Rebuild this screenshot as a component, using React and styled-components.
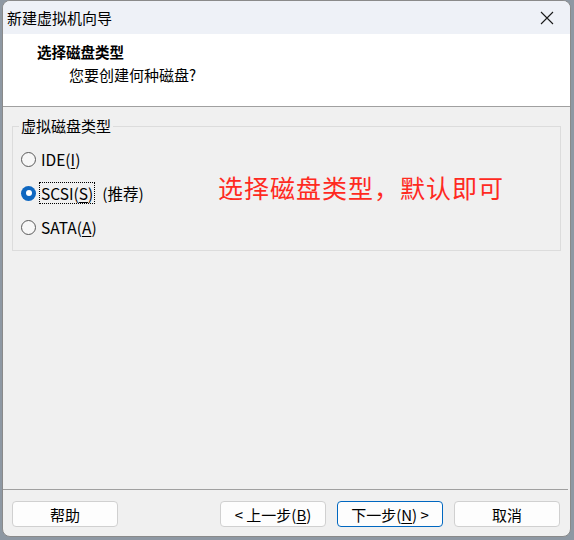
import React from "react";
import styled, { createGlobalStyle } from "styled-components";

const GlobalStyle = createGlobalStyle`
  html, body {
    margin: 0;
    padding: 0;
    background: #8e98a3;
  }
  body {
    font-family: "Noto Sans CJK SC", "Microsoft YaHei", "Noto Sans", sans-serif;
    color: #000;
  }
`;

const Desk = styled.div`
  width: 574px;
  height: 540px;
  padding-left: 2px;
  box-sizing: border-box;
`;

const Window = styled.div`
  width: 569px;
  height: 537px;
  box-sizing: border-box;
  border: 1px solid #8a8a8a;
  border-radius: 8px;
  background: #f0f0f0;
  overflow: hidden;
  display: flex;
  flex-direction: column;
`;

const TitleBar = styled.div`
  height: 33px;
  flex: none;
  background: #eef1f7;
  display: flex;
  align-items: center;
  justify-content: space-between;
  padding-left: 4px;
  font-size: 15px;
`;

const CloseButton = styled.div`
  width: 46px;
  height: 33px;
  display: flex;
  align-items: center;
  justify-content: center;
`;

const Header = styled.div`
  height: 73px;
  flex: none;
  background: #ffffff;
  border-bottom: 1px solid #a0a0a0;
  box-sizing: border-box;
  padding: 8px 0 0 34px;
`;

const HeaderTitle = styled.div`
  font-size: 14.5px;
  font-weight: bold;
  line-height: 20px;
`;

const HeaderSub = styled.div`
  font-size: 15px;
  line-height: 20px;
  margin-left: 32px;
  margin-top: 3px;
`;

const Body = styled.div`
  flex: 1;
  padding: 9px 9px 0 9px;
`;

const GroupBox = styled.fieldset`
  margin: 0;
  height: 135px;
  box-sizing: border-box;
  border: 1px solid #dcdcdc;
  padding: 13px 0 0 8px;
  display: flex;
  flex-direction: column;
  gap: 14px;
  position: relative;
`;

const Legend = styled.legend`
  font-size: 15px;
  padding: 0 2px;
  margin-left: -2px;
  line-height: 20px;
`;

const RadioRow = styled.label`
  display: flex;
  align-items: center;
  height: 20px;
  font-size: 15.5px;
  gap: 3px;
`;

const RadioCircle = styled.span`
  width: 15px;
  height: 15px;
  box-sizing: border-box;
  border-radius: 50%;
  border: ${(p) => (p.checked ? "none" : "1px solid #5a5a5a")};
  background: ${(p) => (p.checked ? "#0f67c0" : "#f7f7f7")};
  display: flex;
  align-items: center;
  justify-content: center;
  flex: none;

  &::after {
    content: "";
    display: ${(p) => (p.checked ? "block" : "none")};
    width: 6px;
    height: 6px;
    border-radius: 50%;
    background: #ffffff;
  }
`;

const RadioText = styled.span`
  padding: 0 1px;
  border: 1px dotted ${(p) => (p.focused ? "#000" : "transparent")};
  line-height: 20px;
`;

const Hint = styled.span`
  margin-left: 4px;
`;

const Note = styled.div`
  position: absolute;
  left: 205px;
  top: 33px;
  font-size: 25px;
  color: #ff2a1f;
  letter-spacing: 1px;
`;

const Footer = styled.div`
  flex: none;
  height: 47px;
  box-sizing: border-box;
  border-top: 1px solid #a0a0a0;
  margin: 0 2px 0 0;
  display: flex;
  align-items: flex-start;
  padding: 11px 8px 0 9px;
  gap: 11px;
`;

const Button = styled.button`
  width: 106px;
  height: 26px;
  box-sizing: border-box;
  background: #fdfdfd;
  border: 1px solid ${(p) => (p.primary ? "#0067c0" : "#d0d0d0")};
  border-radius: 4px;
  font-family: inherit;
  font-size: 15px;
  color: #000;
  padding: 0;
  margin-left: ${(p) => (p.push ? "auto" : "0")};
`;

const U = styled.u`
  text-underline-offset: 2px;
`;

const App = () => {
  return (
    <>
      <GlobalStyle />
      <Desk>
        <Window>
          <TitleBar>
            <span>新建虚拟机向导</span>
            <CloseButton>
              <svg width="14" height="14" viewBox="0 0 14 14">
                <path d="M1 1 L13 13 M13 1 L1 13" stroke="#1a1a1a" strokeWidth="1.1" />
              </svg>
            </CloseButton>
          </TitleBar>
          <Header>
            <HeaderTitle>选择磁盘类型</HeaderTitle>
            <HeaderSub>您要创建何种磁盘?</HeaderSub>
          </Header>
          <Body>
            <GroupBox>
              <Legend>虚拟磁盘类型</Legend>
              <RadioRow>
                <RadioCircle />
                <RadioText>
                  IDE(<U>I</U>)
                </RadioText>
              </RadioRow>
              <RadioRow>
                <RadioCircle checked />
                <RadioText focused>
                  SCSI(<U>S</U>)
                </RadioText>
                <Hint>(推荐)</Hint>
              </RadioRow>
              <RadioRow>
                <RadioCircle />
                <RadioText>
                  SATA(<U>A</U>)
                </RadioText>
              </RadioRow>
              <Note>选择磁盘类型，默认即可</Note>
            </GroupBox>
          </Body>
          <Footer>
            <Button>帮助</Button>
            <Button push>
              &lt; 上一步(<U>B</U>)
            </Button>
            <Button primary>
              下一步(<U>N</U>) &gt;
            </Button>
            <Button>取消</Button>
          </Footer>
        </Window>
      </Desk>
    </>
  );
};

export default App;
